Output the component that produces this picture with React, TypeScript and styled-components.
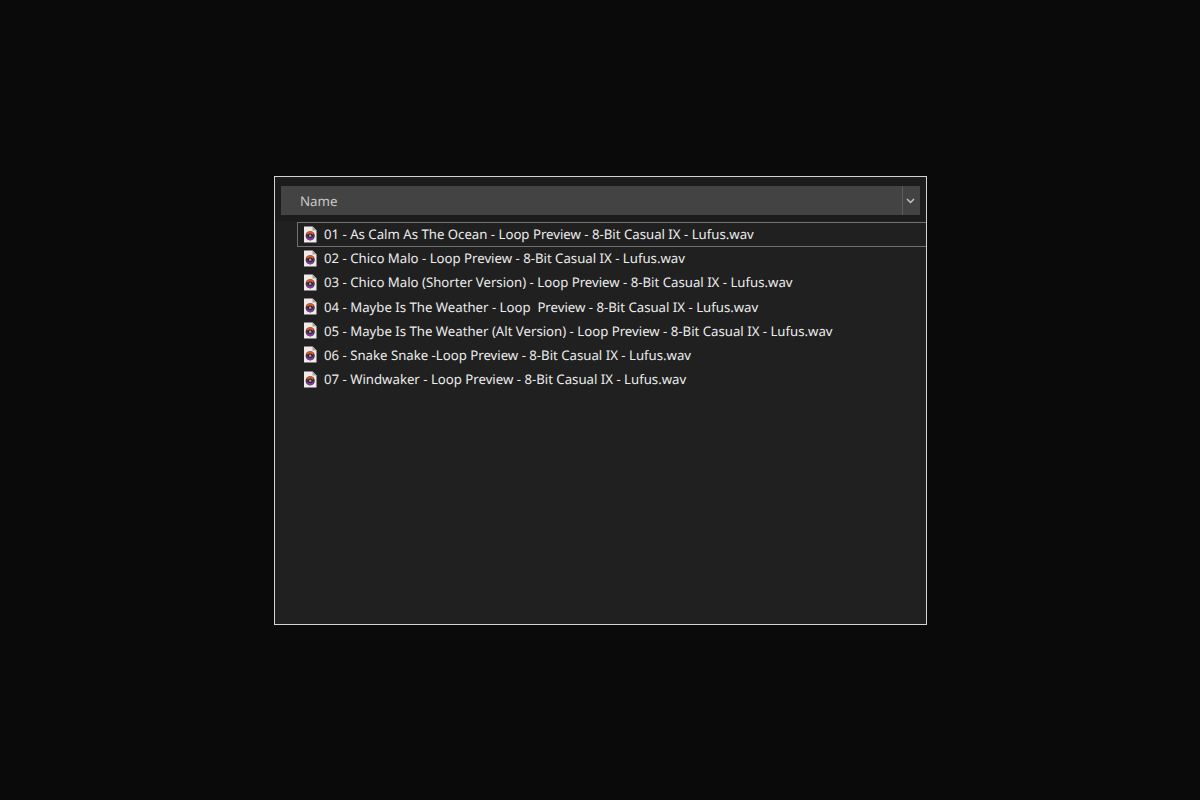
import React from 'react';
import styled, { createGlobalStyle } from 'styled-components';

const GlobalStyle = createGlobalStyle`
  html, body {
    margin: 0;
    height: 100%;
    background: #0a0a0a;
  }
  #root {
    height: 100%;
  }
`;

const Page = styled.div`
  width: 1200px;
  height: 800px;
  padding: 176px 0 0 274px;
  box-sizing: border-box;
  font-family: "Noto Sans", "Open Sans", sans-serif;
  text-rendering: geometricPrecision;
`;

const Explorer = styled.div`
  width: 653px;
  height: 449px;
  box-sizing: border-box;
  border: 1px solid #d4d4d4;
  background: #202020;
  overflow: hidden;
`;

const HeaderArea = styled.div`
  height: 44px;
  box-sizing: border-box;
  padding: 9px 6px 0;
  background: #1c1c1c;
`;

const HeaderBar = styled.div`
  display: flex;
  height: 29px;
  background: #434343;
`;

const HeaderName = styled.div`
  flex: 1;
  padding: 1px 0 0 19px;
  font-size: 13.3px;
  line-height: 28px;
  color: #c8c8c8;
`;

const HeaderToggle = styled.div`
  width: 18px;
  box-sizing: border-box;
  padding-right: 2px;
  border-left: 1px solid #5c5c5c;
  display: flex;
  align-items: center;
  justify-content: center;
`;

const FileList = styled.div`
  display: flex;
  flex-direction: column;
  padding: 1px 0 0 22px;
`;

const Row = styled.div<{ $focused?: boolean }>`
  height: ${(p) => (p.$focused ? '25px' : '24.17px')};
  margin-bottom: ${(p) => (p.$focused ? '-0.83px' : '0')};
  padding-bottom: ${(p) => (p.$focused ? '1px' : '0')};
  box-sizing: border-box;
  display: flex;
  align-items: center;
  gap: 7px;
  padding-left: 5px;
  border: 1px solid ${(p) => (p.$focused ? '#707070' : 'transparent')};
  border-right: 0;
`;

const FileName = styled.span`
  font-size: 13.2px;
  color: #ececec;
  white-space: pre;
`;

const WavIcon = () => (
  <svg width="14" height="17" viewBox="0 0 14 17" style={{ flex: 'none' }}>
    <path d="M1 0.5H9.5L13.5 4.5V16.5H1Z" fill="#efebe8" />
    <path d="M9.5 0.5V4.5H13.5Z" fill="#a8a8a8" />
    <circle cx="7.2" cy="9.8" r="4.6" fill="#5a2a4a" />
    <path d="M3.2 7.6A4.6 4.6 0 0 1 11.2 7.6L7.2 9.8Z" fill="#d0592c" />
    <path d="M3.2 12A4.6 4.6 0 0 0 11.2 12L7.2 9.8Z" fill="#7a3a9c" />
    <circle cx="7.2" cy="9.8" r="2.3" fill="#2a2228" />
    <circle cx="7.2" cy="9.8" r="1.2" fill="#a8a0a0" />
  </svg>
);

const files = [
  '01 - As Calm As The Ocean - Loop Preview - 8-Bit Casual IX - Lufus.wav',
  '02 - Chico Malo - Loop Preview - 8-Bit Casual IX - Lufus.wav',
  '03 - Chico Malo (Shorter Version) - Loop Preview - 8-Bit Casual IX - Lufus.wav',
  '04 - Maybe Is The Weather - Loop  Preview - 8-Bit Casual IX - Lufus.wav',
  '05 - Maybe Is The Weather (Alt Version) - Loop Preview - 8-Bit Casual IX - Lufus.wav',
  '06 - Snake Snake -Loop Preview - 8-Bit Casual IX - Lufus.wav',
  '07 - Windwaker - Loop Preview - 8-Bit Casual IX - Lufus.wav',
];

export default function App() {
  return (
    <Page>
      <GlobalStyle />
      <Explorer>
        <HeaderArea>
          <HeaderBar>
            <HeaderName>Name</HeaderName>
            <HeaderToggle>
              <svg width="9" height="6" viewBox="0 0 9 6">
                <path d="M1 1L4.5 4.5L8 1" fill="none" stroke="#c4c4c4" strokeWidth="1.5" />
              </svg>
            </HeaderToggle>
          </HeaderBar>
        </HeaderArea>
        <FileList>
          {files.map((name, i) => (
            <Row key={name} $focused={i === 0}>
              <WavIcon />
              <FileName>{name}</FileName>
            </Row>
          ))}
        </FileList>
      </Explorer>
    </Page>
  );
}
